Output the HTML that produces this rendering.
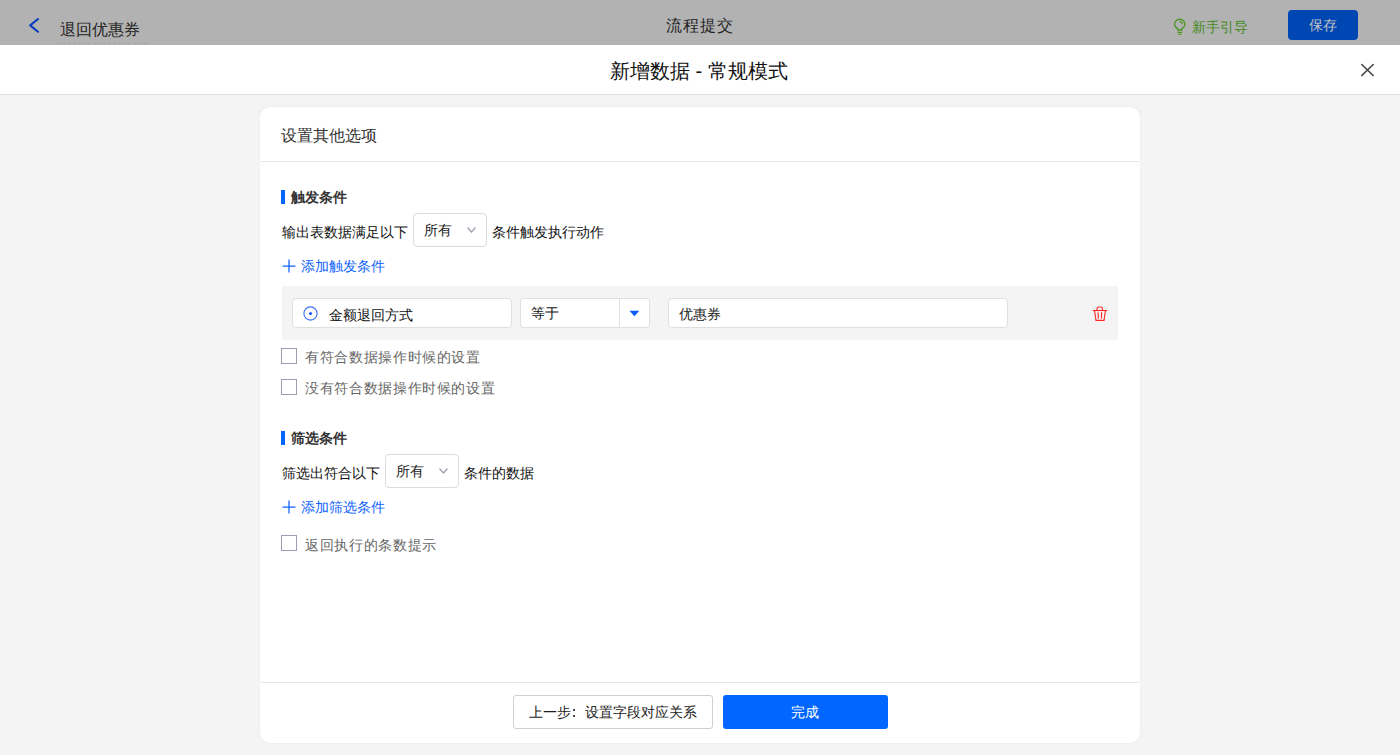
<!DOCTYPE html>
<html><head><meta charset="utf-8">
<style>
*{margin:0;padding:0;box-sizing:border-box}
html,body{width:1400px;height:755px;overflow:hidden;background:#f4f4f4;font-family:"Liberation Sans",sans-serif;color:#333}
.a{position:absolute;white-space:nowrap}
#top{position:absolute;left:0;top:0;width:1400px;height:45px;background:#b2b2b2}
#mh{position:absolute;left:0;top:45px;width:1400px;height:49px;background:#fff}
#mhl{position:absolute;left:0;top:94px;width:1400px;height:1px;background:#e0e0e0}
#card{position:absolute;left:260px;top:107px;width:880px;height:636px;background:#fff;border-radius:10px;box-shadow:0 0 3px rgba(0,0,0,0.05)}
.t14{font-size:14px;line-height:14px}
.bar{position:absolute;width:4px;height:14px;background:#0066ff}
.sel{position:absolute;border:1px solid #dcdcdc;border-radius:4px;background:#fff}
.chev{position:absolute;width:9px;height:6px}
.cb{position:absolute;width:16px;height:16px;border:1px solid #9d9db2;border-radius:0;background:#fff}
.lbl{font-size:14px;line-height:15px;letter-spacing:0.65px;color:#666}
.link{color:#0f63ff}
</style></head><body>
<div id="top"></div>
<!-- back arrow -->
<svg class="a" style="left:27px;top:17px" width="13" height="17" viewBox="0 0 13 17"><path d="M11 2 L3.2 8.4 L11 14.8" fill="none" stroke="#0a3dbd" stroke-width="2.1" stroke-linecap="round" stroke-linejoin="round"/></svg>
<div class="a" style="left:60px;top:22px;font-size:16px;line-height:16px;color:#232323">退回优惠券</div>
<div class="a" style="left:58px;top:43px;width:88px;height:0;border-top:1px dashed #a3a3a3"></div>
<div class="a" style="left:666px;top:18px;font-size:16px;line-height:16px;letter-spacing:1px;color:#232323">流程提交</div>
<!-- bulb -->
<svg class="a" style="left:1168px;top:14px" width="24" height="24" viewBox="0 0 24 24"><g fill="none" stroke="#4a961f" stroke-width="1.3"><path d="M9.8 16 V14.6 C7.8 13.5 6.5 12.2 6.5 10.5 A5.25 5.25 0 0 1 17 10.5 C17 12.2 15.7 13.5 13.9 14.6 V16 Z"/><path d="M9.6 18.4 H14.1 M10.5 20.3 H13.2"/><path d="M11.7 7.6 A3 3 0 0 1 14.4 10.3"/></g></svg>
<div class="a" style="left:1192px;top:20px;font-size:14px;line-height:14px;color:#468a22">新手引导</div>
<div class="a" style="left:1288px;top:10px;width:70px;height:30px;background:#0047b3;border-radius:4px"></div>
<div class="a" style="left:1309px;top:18px;font-size:14px;line-height:14px;color:#c2c2c2">保存</div>

<div id="mh"></div><div id="mhl"></div>
<div class="a" style="left:610px;top:61px;font-size:20px;line-height:20px;color:#111">新增数据 - 常规模式</div>
<svg class="a" style="left:1360px;top:63px" width="15" height="14" viewBox="0 0 15 14"><path d="M1.8 1.5 L13.2 12.5 M13.2 1.5 L1.8 12.5" stroke="#444" stroke-width="1.6" stroke-linecap="round"/></svg>

<div id="card"></div>
<div class="a" style="left:281px;top:128px;font-size:16px;line-height:16px;color:#333">设置其他选项</div>
<div class="a" style="left:261px;top:161px;width:878px;height:1px;background:#e6e6e6"></div>

<!-- trigger section -->
<div class="bar" style="left:281px;top:190px"></div>
<div class="a" style="left:291px;top:190px;font-size:14px;line-height:14px;font-weight:bold;color:#333">触发条件</div>
<div class="a t14" style="left:282px;top:225px;color:#111">输出表数据满足以下</div>
<div class="sel" style="left:413px;top:213px;width:74px;height:34px"></div>
<div class="a t14" style="left:424px;top:223px;color:#1a1a1a">所有</div>
<svg class="chev" style="left:467px;top:227px" viewBox="0 0 9 6"><path d="M0.5 0.5 L4.5 5 L8.5 0.5" fill="none" stroke="#9e9eb0" stroke-width="1.2"/></svg>
<div class="a t14" style="left:492px;top:225px;color:#111">条件触发执行动作</div>
<svg class="a" style="left:282px;top:259px" width="14" height="14" viewBox="0 0 14 14"><path d="M7 0.5 V13.5 M0.5 7 H13.5" stroke="#0f63ff" stroke-width="1.25"/></svg>
<div class="a t14 link" style="left:301px;top:259px">添加触发条件</div>

<div class="a" style="left:282px;top:286px;width:836px;height:54px;background:#f4f4f4;border-radius:2px"></div>
<div class="sel" style="left:292px;top:298px;width:220px;height:30px;border-color:#e0e0e0"></div>
<svg class="a" style="left:303px;top:306px" width="15" height="15" viewBox="0 0 15 15"><circle cx="7.5" cy="7.5" r="6.6" fill="none" stroke="#3b6dff" stroke-width="1.1"/><circle cx="7.5" cy="7.5" r="1.6" fill="#1a5cff"/></svg>
<div class="a t14" style="left:329px;top:308px;color:#111">金额退回方式</div>
<div class="sel" style="left:520px;top:298px;width:130px;height:30px;border-color:#e0e0e0;border-radius:3px"></div>
<div class="a" style="left:619px;top:299px;width:1px;height:28px;background:#e0e0e0"></div>
<svg class="a" style="left:629px;top:310px" width="11" height="7" viewBox="0 0 11 7"><path d="M0.5 0.8 H10.3 L5.4 6.2 Z" fill="#0a5cff"/></svg>
<div class="a t14" style="left:531px;top:306px;color:#111">等于</div>
<div class="sel" style="left:668px;top:298px;width:340px;height:30px;border-color:#e0e0e0"></div>
<div class="a t14" style="left:679px;top:307px;color:#1a1a1a">优惠券</div>
<!-- trash -->
<svg class="a" style="left:1088px;top:302px" width="24" height="24" viewBox="0 0 24 24"><g fill="none" stroke="#ff2424" stroke-width="1.1"><path d="M4.8 8.5 H19.2"/><path d="M9 8.3 V6.6 Q9 5 10.6 5 H12.8 Q14.4 5 14.4 6.6 V8.3"/><path d="M6.6 9 L8 18.4 H16 L17.4 9"/><path d="M10 10.3 L10.4 16.6 M13.6 10.3 L13.4 16.6"/></g></svg>

<div class="cb" style="left:281px;top:348px"></div>
<div class="a lbl" style="left:305px;top:350px">有符合数据操作时候的设置</div>
<div class="cb" style="left:281px;top:379px"></div>
<div class="a lbl" style="left:305px;top:381px">没有符合数据操作时候的设置</div>

<!-- filter section -->
<div class="bar" style="left:281px;top:431px"></div>
<div class="a" style="left:291px;top:431px;font-size:14px;line-height:14px;font-weight:bold;color:#333">筛选条件</div>
<div class="a t14" style="left:282px;top:466px;color:#111">筛选出符合以下</div>
<div class="sel" style="left:385px;top:454px;width:74px;height:34px"></div>
<div class="a t14" style="left:396px;top:464px;color:#1a1a1a">所有</div>
<svg class="chev" style="left:439px;top:468px" viewBox="0 0 9 6"><path d="M0.5 0.5 L4.5 5 L8.5 0.5" fill="none" stroke="#9e9eb0" stroke-width="1.2"/></svg>
<div class="a t14" style="left:464px;top:466px;color:#111">条件的数据</div>
<svg class="a" style="left:282px;top:500px" width="14" height="14" viewBox="0 0 14 14"><path d="M7 0.5 V13.5 M0.5 7 H13.5" stroke="#0f63ff" stroke-width="1.25"/></svg>
<div class="a t14 link" style="left:301px;top:500px">添加筛选条件</div>
<div class="cb" style="left:281px;top:535px"></div>
<div class="a lbl" style="left:305px;top:538px">返回执行的条数提示</div>

<!-- footer -->
<div class="a" style="left:261px;top:682px;width:878px;height:1px;background:#e6e6e6"></div>
<div class="a" style="left:513px;top:695px;width:200px;height:34px;border:1px solid #d0d0d0;border-radius:3px;background:#fff"></div>
<div class="a t14" style="left:529px;top:705px;color:#1a1a1a">上一步</div>
<div class="a" style="left:573px;top:709px;width:2px;height:2px;background:#444"></div>
<div class="a" style="left:573px;top:715px;width:2px;height:2px;background:#444"></div>
<div class="a t14" style="left:585px;top:705px;color:#1a1a1a">设置字段对应关系</div>
<div class="a" style="left:723px;top:695px;width:165px;height:34px;background:#0066ff;border-radius:3px"></div>
<div class="a t14" style="left:791px;top:705px;color:#fff">完成</div>
</body></html>
